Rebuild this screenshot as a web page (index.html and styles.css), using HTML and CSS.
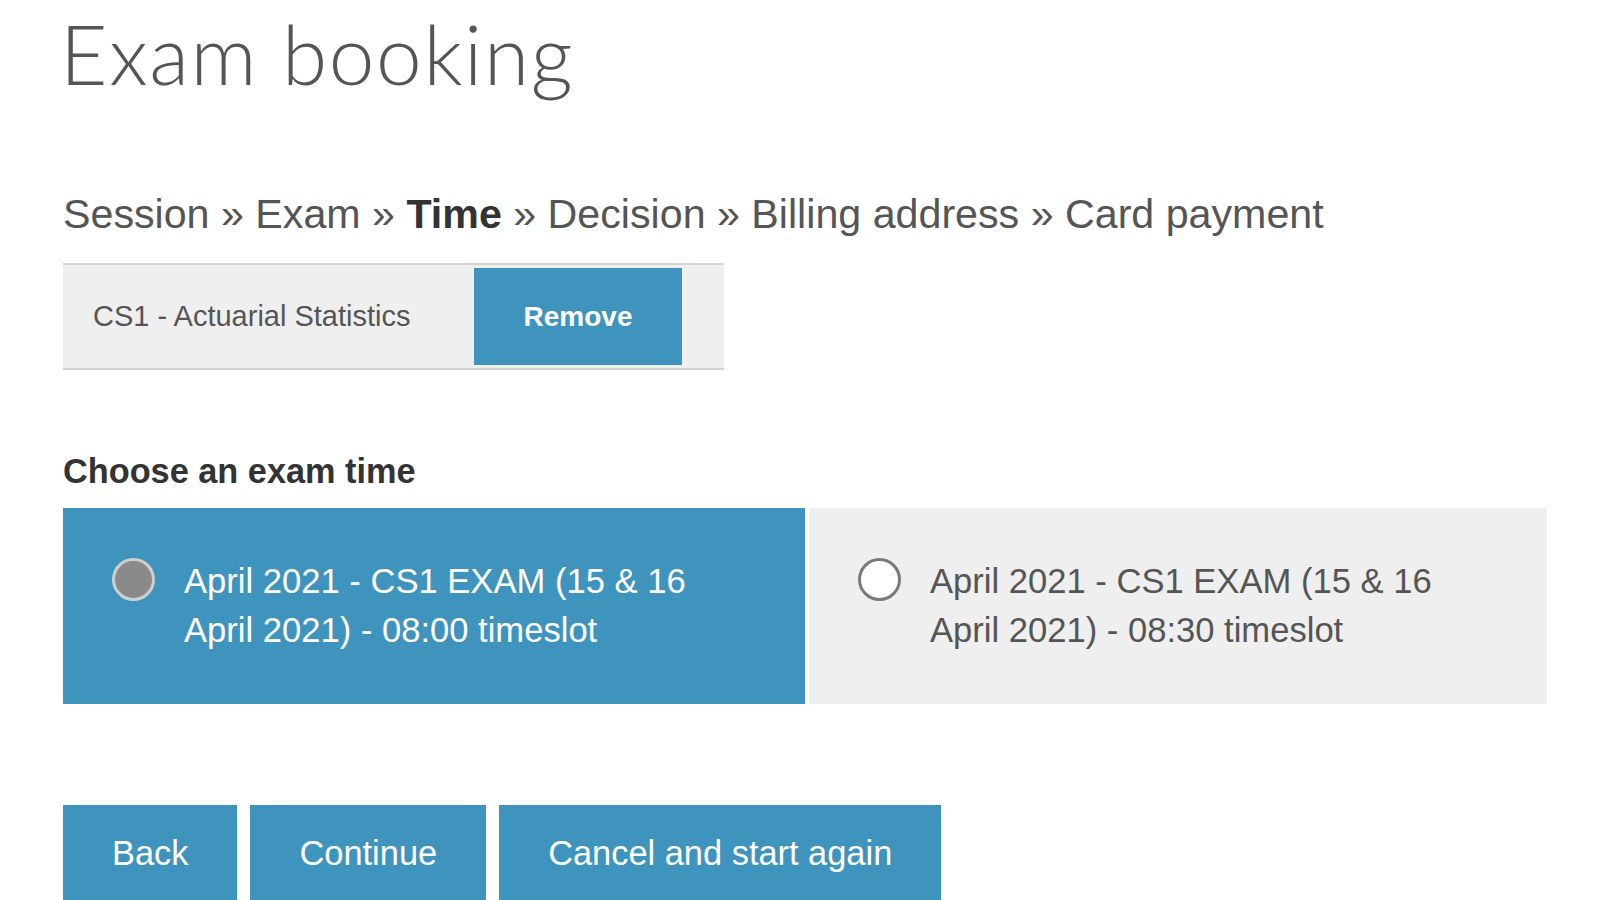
FILE: index.html
```html
<!DOCTYPE html>
<html lang="en">
<head>
<meta charset="utf-8">
<title>Exam booking</title>
<link rel="stylesheet" href="styles.css">
</head>
<body>
<main class="page">
  <h1 class="title">Exam booking</h1>
  <nav class="steps">Session » Exam » <strong>Time</strong> » Decision » Billing address » Card payment</nav>
  <div class="selected">
    <span class="selected-name">CS1 - Actuarial Statistics</span>
    <button class="btn btn-remove" type="button">Remove</button>
  </div>
  <h2 class="choose">Choose an exam time</h2>
  <div class="options">
    <label class="option option-on">
      <span class="radio radio-on"></span>
      <span class="option-text">April 2021 - CS1 EXAM (15 &amp; 16<br>April 2021) - 08:00 timeslot</span>
    </label>
    <label class="option">
      <span class="radio"></span>
      <span class="option-text">April 2021 - CS1 EXAM (15 &amp; 16<br>April 2021) - 08:30 timeslot</span>
    </label>
  </div>
  <div class="actions">
    <button class="btn btn-action" type="button">Back</button>
    <button class="btn btn-action" type="button">Continue</button>
    <button class="btn btn-action" type="button">Cancel and start again</button>
  </div>
</main>
</body>
</html>
```
FILE: styles.css
```css
html, body {
  margin: 0;
  padding: 0;
  background: #ffffff;
}
body {
  font-family: "Liberation Sans", Arial, sans-serif;
  color: #555555;
  overflow: hidden;
}
.page {
  padding: 0 0 0 63px;
  width: 1490px;
}
.title {
  font-family: Lato, "Open Sans", sans-serif;
  font-weight: 300;
  font-size: 82px;
  line-height: 1;
  color: #555555;
  margin: 12px 0 0 -3px;
  letter-spacing: 1.6px;
}
.steps {
  font-size: 41.2px;
  line-height: 1;
  color: #555555;
  margin-top: 100px;
}
.steps strong {
  color: #333333;
  font-weight: bold;
}
.selected {
  display: flex;
  align-items: center;
  width: 661px;
  box-sizing: border-box;
  margin-top: 28px;
  padding: 3px 42px 3px 30px;
  background: #efefef;
  border-top: 2px solid #d2d2d2;
  border-bottom: 2px solid #d2d2d2;
}
.selected-name {
  font-size: 29px;
  color: #555555;
  flex: 1;
}
.btn {
  font-family: "Liberation Sans", Arial, sans-serif;
  background: #3f94bd;
  color: #ffffff;
  border: 0;
  margin: 0;
  cursor: pointer;
}
.btn-remove {
  width: 208px;
  height: 97px;
  font-size: 28px;
  font-weight: bold;
}
.choose {
  font-size: 34.3px;
  font-weight: bold;
  color: #333333;
  line-height: 1;
  margin: 84px 0 0 0;
}
.options {
  display: grid;
  grid-template-columns: 742px 738px;
  gap: 4px;
  margin-top: 19px;
}
.option {
  display: flex;
  align-items: flex-start;
  height: 196px;
  box-sizing: border-box;
  padding: 50px 20px 0 49px;
  background: #eeefee;
  color: #555555;
}
.option-on {
  background: #3f94bd;
  color: #ffffff;
}
.radio {
  flex: none;
  width: 43px;
  height: 43px;
  box-sizing: border-box;
  border-radius: 50%;
  border: 3px solid #7a7a7a;
  background: #ffffff;
}
.radio-on {
  background: #8a8a8a;
  border: 3px solid #cfcfcf;
}
.option-text {
  font-size: 34.6px;
  line-height: 49px;
  margin-left: 29px;
  margin-top: -1px;
}
.actions {
  display: flex;
  gap: 13px;
  margin-top: 101px;
}
.btn-action {
  height: 97px;
  padding: 0 49px;
  font-size: 34.4px;
}
```
